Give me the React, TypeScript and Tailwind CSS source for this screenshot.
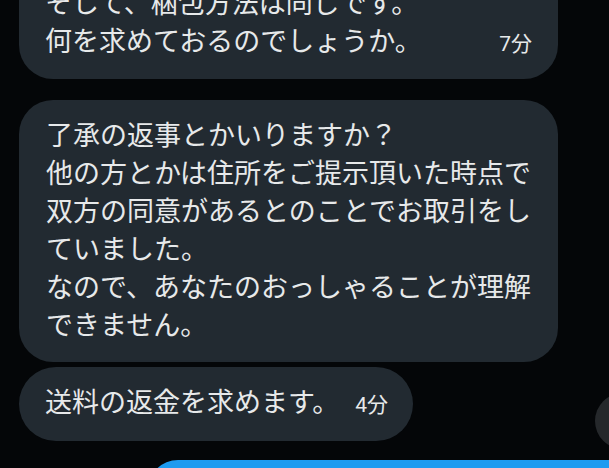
const font = { fontFamily: 'Roboto, "Noto Sans CJK JP", sans-serif' };

const Time = ({ children }: { children: string }) => (
  <span className="text-[21px] text-[#e7e9ea]">{children}</span>
);

export default function App() {
  return (
    <div
      className="relative w-[609px] h-[468px] overflow-hidden bg-[#040608] text-[#e7e9ea]"
      style={font}
    >
      <div className="flex flex-col items-start pl-[19px] text-[27px] leading-[38px]">
        {/* bubble 1, top is scrolled off */}
        <div className="-mt-[32px] w-[539px] rounded-b-[34px] bg-[#222a31] px-[26px] pt-[17px] pb-[16px] whitespace-nowrap">
          <div>そして、梱包方法は同じです。</div>
          <div className="flex items-baseline justify-between">
            <span>何を求めておるのでしょうか。</span>
            <Time>7分</Time>
          </div>
        </div>

        <div className="mt-[21px] w-[539px] rounded-[34px] bg-[#222a31] px-[27px] py-[17px] whitespace-nowrap">
          <div>了承の返事とかいりますか？</div>
          <div>他の方とかは住所をご提示頂いた時点で</div>
          <div>双方の同意があるとのことでお取引をし</div>
          <div>ていました。</div>
          <div>なので、あなたのおっしゃることが理解</div>
          <div>できません。</div>
        </div>

        <div className="mt-[5px] flex items-baseline rounded-full bg-[#222a31] pl-[26px] pr-[25px] py-[17px] whitespace-nowrap">
          <span>送料の返金を求めます。</span>
          <span className="ml-[16px]">
            <Time>4分</Time>
          </span>
        </div>

        <div className="mt-[19px] ml-[129px] h-[60px] w-[500px] shrink-0 rounded-tl-[30px] bg-[#1d9bf0]" />
      </div>

      {/* scroll-down button peeking in from the right */}
      <div className="absolute left-[595px] top-[393px] h-[56px] w-[56px] rounded-full bg-[#25282b]" />
    </div>
  );
}
